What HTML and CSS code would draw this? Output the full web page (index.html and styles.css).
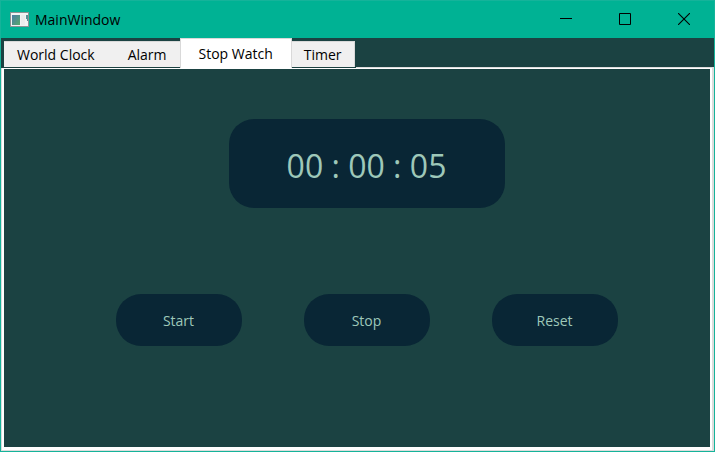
FILE: index.html
```html
<!DOCTYPE html>
<html lang="en">
<head>
<meta charset="utf-8">
<title>MainWindow</title>
<link rel="stylesheet" href="styles.css">
</head>
<body>
<div class="window">
  <header class="titlebar">
    <svg class="app-icon" width="19" height="16" viewBox="0 0 19 16" aria-hidden="true">
      <defs>
        <linearGradient id="photo" x1="0" y1="0" x2="1" y2="1">
          <stop offset="0" stop-color="#497da6"/>
          <stop offset="1" stop-color="#58a96c"/>
        </linearGradient>
      </defs>
      <rect x="0" y="0" width="19" height="15" fill="#8b9294"/>
      <rect x="1" y="1" width="17" height="13" fill="#f1f3f3"/>
      <rect x="2" y="3" width="8" height="10" fill="url(#photo)"/>
      <rect x="11" y="3" width="4" height="10" fill="#e9ecec"/>
      <path d="M16 3h2v6h-1v-2h-1z" fill="#569096"/>
    </svg>
    <h1 class="title">MainWindow</h1>
    <div class="controls">
      <button class="control" type="button" aria-label="Minimize">
        <svg width="12" height="12" viewBox="0 0 12 12"><rect y="5" width="12" height="1"/></svg>
      </button>
      <button class="control" type="button" aria-label="Maximize">
        <svg width="12" height="12" viewBox="0 0 12 12"><path d="M.5 .5h11v11h-11z" fill="none" stroke="#000"/></svg>
      </button>
      <button class="control" type="button" aria-label="Close">
        <svg width="12" height="12" viewBox="0 0 12 12"><path d="M0 0L12 12M12 0L0 12" fill="none" stroke="#000" stroke-width="1.1"/></svg>
      </button>
    </div>
  </header>
  <nav class="tabs" role="tablist">
    <button class="tab" type="button" role="tab">World Clock</button>
    <button class="tab" type="button" role="tab">Alarm</button>
    <button class="tab selected" type="button" role="tab" aria-selected="true">Stop Watch</button>
    <button class="tab" type="button" role="tab">Timer</button>
  </nav>
  <main class="pane">
    <div class="content">
      <div class="display">00 : 00 : 05</div>
      <div class="actions">
        <button class="action" type="button">Start</button>
        <button class="action" type="button">Stop</button>
        <button class="action" type="button">Reset</button>
      </div>
    </div>
  </main>
</div>
</body>
</html>
```
FILE: styles.css
```css
* {
  box-sizing: border-box;
}

body {
  margin: 0;
  font: 14px/20px "Open Sans", "Noto Sans", sans-serif;
  color: #000;
}

button {
  font: inherit;
  color: inherit;
  border: 0;
  padding: 0;
}

.window {
  display: flex;
  flex-direction: column;
  min-height: 100vh;
  border: 1px solid #15b39a;
  background: #1b4242;
}

.titlebar {
  display: flex;
  align-items: center;
  height: 37px;
  padding-left: 9px;
  background: #00b294;
}

.app-icon {
  margin-right: 6px;
}

.title {
  margin: 0;
  font-size: 14px;
  font-weight: 400;
}

.controls {
  display: flex;
  align-self: stretch;
  margin-left: auto;
  padding: 0 1px 2px 0;
}

.control {
  display: flex;
  align-items: center;
  justify-content: center;
  width: 59px;
  background: transparent;
}

.tabs {
  display: flex;
  align-items: flex-end;
  align-self: flex-start;
  z-index: 1;
  height: 30px;
  margin-bottom: -1px;
  padding: 0 1px 0 3px;
  background: #1b4242;
}

.tab {
  height: 26px;
  padding: 0 13px;
  margin-bottom: 1px;
  border: 1px solid #d9d9d9;
  border-width: 1px 0 0;
  background: #f0f0f0;
}

.tab:nth-child(2) {
  padding: 0 13px 0 20px;
}

.tab:last-child {
  padding: 0 12px;
  border-right-width: 1px;
}

.tab.selected {
  height: 30px;
  padding: 0 18px;
  margin-bottom: 0;
  border-width: 1px 1px 0;
  background: #fff;
}

.pane {
  display: flex;
  flex: 1;
  border: 1px solid #dcdcdc;
  border-width: 1px 2px 1px 1px;
  background: #fff;
  padding: 1px 2px 3px;
}

.content {
  display: flex;
  flex: 1;
  flex-direction: column;
  align-items: center;
  gap: 86px;
  padding: 50px 0 50px 19px;
  background: #1b4242;
}

.display {
  display: flex;
  align-items: center;
  justify-content: center;
  width: 276px;
  height: 89px;
  padding-top: 4px;
  border-radius: 25px;
  background: #092635;
  color: #9ec8b9;
  font-size: 32px;
  line-height: 44px;
}

.actions {
  display: flex;
  gap: 62px;
}

.action {
  width: 126px;
  height: 52px;
  padding-top: 2px;
  border-radius: 25px;
  background: #092635;
  color: #9ec8b9;
}
```
